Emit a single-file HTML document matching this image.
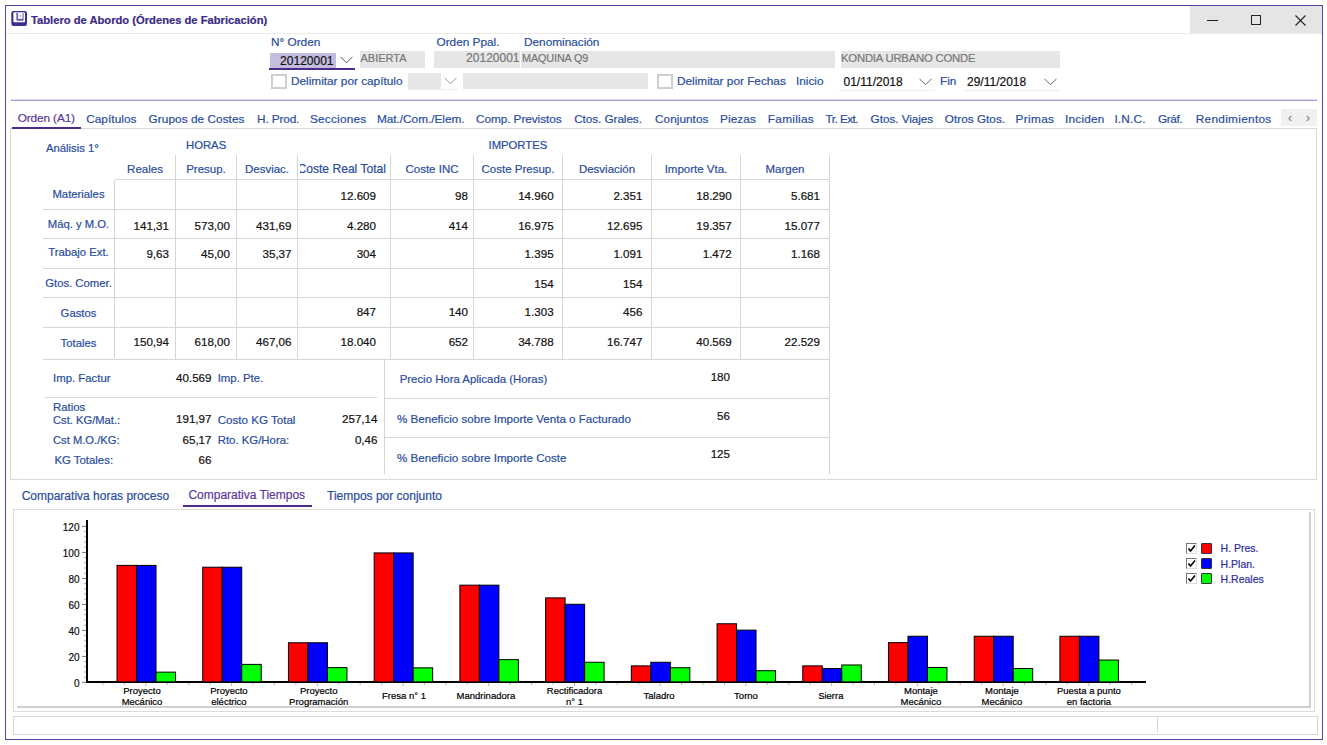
<!DOCTYPE html>
<html><head><meta charset="utf-8"><style>
html,body{margin:0;padding:0;background:#fff;}
body{width:1327px;height:745px;position:relative;overflow:hidden;font-family:"Liberation Sans",sans-serif;}
.t{position:absolute;white-space:nowrap;line-height:1;-webkit-text-stroke:0.2px currentColor;}
.r{position:absolute;}
</style></head><body>
<div class="r" style="left:5px;top:5px;width:1318px;height:735px;border:1px solid #5f3f9f;box-sizing:border-box;background:#fff;"></div>
<div class="r" style="left:1190px;top:6px;width:132px;height:27px;background:#e5e5e5;"></div>
<div class="r" style="left:6px;top:33px;width:1316px;height:1px;background:#ececec;"></div>
<svg class="r" style="left:11px;top:11px" width="17" height="16" viewBox="0 0 17 16">
<rect x="0.3" y="0" width="15.7" height="15" rx="2.2" fill="#3f2d8f"/>
<rect x="2.4" y="1.3" width="11.6" height="10" rx="1" fill="#fff"/>
<rect x="5.4" y="1.8" width="7.2" height="8" rx="0.8" fill="#6656ad"/>
<rect x="7" y="1.8" width="4.6" height="6" fill="#fff"/>
<rect x="8.6" y="4" width="1.8" height="1.8" fill="#b3a9d9"/>
</svg>
<div class="t" style="top:14.52px;font-size:11.2px;color:#3a2a86;font-weight:700;left:31px;">Tablero de Abordo (Órdenes de Fabricación)</div>
<div class="r" style="left:1207px;top:20px;width:11px;height:1px;background:#222;"></div>
<div class="r" style="left:1251px;top:15px;width:10px;height:10px;border:1px solid #222;box-sizing:border-box;"></div>
<svg class="r" style="left:1295px;top:15px" width="11" height="11" viewBox="0 0 11 11"><path d="M0.5 0.5L10.5 10.5M10.5 0.5L0.5 10.5" stroke="#222" stroke-width="1.1"/></svg>
<div class="t" style="top:36.51px;font-size:11.8px;color:#2a4d9d;left:271px;">N° Orden</div>
<div class="t" style="top:36.51px;font-size:11.8px;color:#2a4d9d;left:436.5px;">Orden Ppal.</div>
<div class="t" style="top:36.51px;font-size:11.8px;color:#2a4d9d;left:524px;">Denominación</div>
<div class="r" style="left:270px;top:52px;width:85px;height:17px;background:#fff;"></div>
<div class="r" style="left:270px;top:53px;width:66px;height:15px;background:#c5bde0;"></div>
<div class="r" style="left:269px;top:68px;width:86px;height:2px;background:#4b2a8a;"></div>
<div class="t" style="top:55.34px;font-size:12px;color:#111;right:993.5px;">20120001</div>
<svg class="r" style="left:340px;top:56px" width="13" height="8" viewBox="0 0 13 8"><path d="M0.5 0.8L6.5 6.8L12.5 0.8" fill="none" stroke="#555" stroke-width="1"/></svg>
<div class="r" style="left:360px;top:51px;width:65px;height:17px;background:#e6e6e6;"></div>
<div class="t" style="top:52.99px;font-size:11px;color:#777;left:360.5px;">ABIERTA</div>
<div class="r" style="left:434px;top:51px;width:86px;height:17px;background:#e6e6e6;"></div>
<div class="t" style="top:52.14px;font-size:12px;color:#777;right:807.5px;">20120001</div>
<div class="r" style="left:521px;top:51px;width:314px;height:17px;background:#e6e6e6;"></div>
<div class="t" style="top:53.16px;font-size:10.8px;color:#777;left:522px;letter-spacing:-0.1px;">MAQUINA Q9</div>
<div class="r" style="left:841px;top:51px;width:219px;height:17px;background:#e6e6e6;"></div>
<div class="t" style="top:52.73px;font-size:11.3px;color:#777;left:841px;letter-spacing:-0.2px;">KONDIA URBANO CONDE</div>
<div class="r" style="left:271px;top:74px;width:16px;height:15px;border:2px solid #cfcfcf;box-sizing:border-box;background:#fff;"></div>
<div class="t" style="top:76.01px;font-size:11.8px;color:#2a4d9d;left:291px;">Delimitar por capítulo</div>
<div class="r" style="left:408px;top:73px;width:33px;height:16px;background:#e6e6e6;"></div>
<div class="r" style="left:408px;top:89px;width:50px;height:1px;background:#eeeeee;"></div>
<svg class="r" style="left:444px;top:77px" width="13" height="8" viewBox="0 0 13 8"><path d="M0.5 0.8L6.5 6.8L12.5 0.8" fill="none" stroke="#999" stroke-width="1"/></svg>
<div class="r" style="left:463px;top:73px;width:185px;height:16px;background:#e6e6e6;"></div>
<div class="r" style="left:657px;top:74px;width:16px;height:15px;border:2px solid #cfcfcf;box-sizing:border-box;background:#fff;"></div>
<div class="t" style="top:76.01px;font-size:11.8px;color:#2a4d9d;left:677px;">Delimitar por Fechas</div>
<div class="t" style="top:75.51px;font-size:11.8px;color:#2a4d9d;left:796px;">Inicio</div>
<div class="t" style="top:75.84px;font-size:12px;color:#111;left:843.5px;">01/11/2018</div>
<div class="r" style="left:839px;top:90px;width:95px;height:1px;background:#eeeeee;"></div>
<svg class="r" style="left:919px;top:78px" width="13" height="8" viewBox="0 0 13 8"><path d="M0.5 0.8L6.5 6.8L12.5 0.8" fill="none" stroke="#666" stroke-width="1"/></svg>
<div class="t" style="top:75.51px;font-size:11.8px;color:#2a4d9d;left:940px;">Fin</div>
<div class="t" style="top:75.84px;font-size:12px;color:#111;left:967px;">29/11/2018</div>
<div class="r" style="left:964px;top:90px;width:96px;height:1px;background:#eeeeee;"></div>
<svg class="r" style="left:1044px;top:78px" width="13" height="8" viewBox="0 0 13 8"><path d="M0.5 0.8L6.5 6.8L12.5 0.8" fill="none" stroke="#666" stroke-width="1"/></svg>
<div class="r" style="left:11px;top:100px;width:1306px;height:1px;background:#a896d2;"></div>
<div class="r" style="left:11px;top:99px;width:1306px;height:1px;background:#e2dbef;"></div>
<div class="t" style="top:112.81px;font-size:11.8px;color:#5a3a98;left:17.7px;letter-spacing:-0.11px;">Orden (A1)</div>
<div class="t" style="top:113.81px;font-size:11.8px;color:#2a4d9d;left:86.2px;letter-spacing:0.05px;">Capítulos</div>
<div class="t" style="top:113.81px;font-size:11.8px;color:#2a4d9d;left:148.6px;letter-spacing:0.05px;">Grupos de Costes</div>
<div class="t" style="top:113.81px;font-size:11.8px;color:#2a4d9d;left:257.0px;letter-spacing:-0.13px;">H. Prod.</div>
<div class="t" style="top:113.81px;font-size:11.8px;color:#2a4d9d;left:310.0px;letter-spacing:0.21px;">Secciones</div>
<div class="t" style="top:113.81px;font-size:11.8px;color:#2a4d9d;left:377.0px;letter-spacing:-0.02px;">Mat./Com./Elem.</div>
<div class="t" style="top:113.81px;font-size:11.8px;color:#2a4d9d;left:476px;letter-spacing:-0.07px;">Comp. Previstos</div>
<div class="t" style="top:113.81px;font-size:11.8px;color:#2a4d9d;left:574.2px;letter-spacing:-0.09px;">Ctos. Grales.</div>
<div class="t" style="top:113.81px;font-size:11.8px;color:#2a4d9d;left:655.0px;letter-spacing:0.04px;">Conjuntos</div>
<div class="t" style="top:113.81px;font-size:11.8px;color:#2a4d9d;left:720.0px;letter-spacing:0.08px;">Piezas</div>
<div class="t" style="top:113.81px;font-size:11.8px;color:#2a4d9d;left:767.8px;letter-spacing:0.29px;">Familias</div>
<div class="t" style="top:113.81px;font-size:11.8px;color:#2a4d9d;left:825.6px;letter-spacing:-0.56px;">Tr. Ext.</div>
<div class="t" style="top:113.81px;font-size:11.8px;color:#2a4d9d;left:870.6px;letter-spacing:-0.07px;">Gtos. Viajes</div>
<div class="t" style="top:113.81px;font-size:11.8px;color:#2a4d9d;left:944.8px;letter-spacing:0px;">Otros Gtos.</div>
<div class="t" style="top:113.81px;font-size:11.8px;color:#2a4d9d;left:1015.6px;letter-spacing:0.34px;">Primas</div>
<div class="t" style="top:113.81px;font-size:11.8px;color:#2a4d9d;left:1065.0px;letter-spacing:0.22px;">Inciden</div>
<div class="t" style="top:113.81px;font-size:11.8px;color:#2a4d9d;left:1114.4px;letter-spacing:0.2px;">I.N.C.</div>
<div class="t" style="top:113.81px;font-size:11.8px;color:#2a4d9d;left:1158px;letter-spacing:-0.4px;">Gráf.</div>
<div class="t" style="top:113.81px;font-size:11.8px;color:#2a4d9d;left:1195.8px;letter-spacing:0.3px;">Rendimientos</div>
<div class="r" style="left:1281px;top:109px;width:36px;height:17px;background:#f0f0f0;"></div>
<div class="t" style="top:111.84px;font-size:12px;color:#888;left:1140px;width:300px;text-align:center;width:20px;left:1280px;">&lsaquo;</div>
<div class="t" style="top:111.84px;font-size:12px;color:#888;left:1158px;width:300px;text-align:center;width:20px;left:1298px;">&rsaquo;</div>
<div class="r" style="left:10px;top:128px;width:1307px;height:352px;border:1px solid #d9d9d9;box-sizing:border-box;"></div>
<div class="r" style="left:12px;top:127px;width:69px;height:2px;background:#4b2a8a;"></div>
<div class="t" style="top:143.43px;font-size:11.3px;color:#2a4d9d;left:46px;">Análisis 1°</div>
<div class="t" style="top:140.13px;font-size:11.3px;color:#2a4d9d;left:186px;">HORAS</div>
<div class="t" style="top:140.13px;font-size:11.3px;color:#2a4d9d;left:488.5px;">IMPORTES</div>
<div class="t" style="top:163.77px;font-size:11.5px;color:#2a4d9d;left:-5.0px;width:300px;text-align:center;">Reales</div>
<div class="t" style="top:163.77px;font-size:11.5px;color:#2a4d9d;left:56.0px;width:300px;text-align:center;">Presup.</div>
<div class="t" style="top:163.77px;font-size:11.5px;color:#2a4d9d;left:117.0px;width:300px;text-align:center;">Desviac.</div>
<div class="r" style="left:300px;top:160px;width:87px;height:18px;overflow:hidden;"><div class="t" style="right:1px;top:3.26px;font-size:12.1px;color:#2a4d9d;">Coste Real Total</div></div>
<div class="t" style="top:163.77px;font-size:11.5px;color:#2a4d9d;left:282.0px;width:300px;text-align:center;">Coste INC</div>
<div class="t" style="top:163.77px;font-size:11.5px;color:#2a4d9d;left:368.0px;width:300px;text-align:center;">Coste Presup.</div>
<div class="t" style="top:163.77px;font-size:11.5px;color:#2a4d9d;left:457.0px;width:300px;text-align:center;">Desviación</div>
<div class="t" style="top:163.77px;font-size:11.5px;color:#2a4d9d;left:546.0px;width:300px;text-align:center;">Importe Vta.</div>
<div class="t" style="top:163.77px;font-size:11.5px;color:#2a4d9d;left:635.0px;width:300px;text-align:center;">Margen</div>
<div class="r" style="left:175px;top:155px;width:1px;height:204px;background:#d6d6d6;"></div>
<div class="r" style="left:236px;top:155px;width:1px;height:204px;background:#d6d6d6;"></div>
<div class="r" style="left:297px;top:155px;width:1px;height:204px;background:#d6d6d6;"></div>
<div class="r" style="left:390px;top:155px;width:1px;height:204px;background:#d6d6d6;"></div>
<div class="r" style="left:473px;top:155px;width:1px;height:204px;background:#d6d6d6;"></div>
<div class="r" style="left:562px;top:155px;width:1px;height:204px;background:#d6d6d6;"></div>
<div class="r" style="left:651px;top:155px;width:1px;height:204px;background:#d6d6d6;"></div>
<div class="r" style="left:740px;top:155px;width:1px;height:204px;background:#d6d6d6;"></div>
<div class="r" style="left:829px;top:155px;width:1px;height:204px;background:#d6d6d6;"></div>
<div class="r" style="left:114px;top:180px;width:1px;height:178px;background:#d6d6d6;"></div>
<div class="r" style="left:115px;top:179px;width:715px;height:1px;background:#d6d6d6;"></div>
<div class="r" style="left:43px;top:209px;width:787px;height:1px;background:#d6d6d6;"></div>
<div class="r" style="left:43px;top:238px;width:787px;height:1px;background:#d6d6d6;"></div>
<div class="r" style="left:43px;top:268px;width:787px;height:1px;background:#d6d6d6;"></div>
<div class="r" style="left:43px;top:297px;width:787px;height:1px;background:#d6d6d6;"></div>
<div class="r" style="left:43px;top:327px;width:787px;height:1px;background:#d6d6d6;"></div>
<div class="r" style="left:43px;top:359px;width:787px;height:1px;background:#d6d6d6;"></div>
<div class="t" style="top:188.83px;font-size:11.3px;color:#2a4d9d;left:-71.5px;width:300px;text-align:center;">Materiales</div>
<div class="t" style="top:189.98px;font-size:11.6px;color:#111;right:951px;">12.609</div>
<div class="t" style="top:189.98px;font-size:11.6px;color:#111;right:859px;">98</div>
<div class="t" style="top:189.98px;font-size:11.6px;color:#111;right:773.4px;">14.960</div>
<div class="t" style="top:189.98px;font-size:11.6px;color:#111;right:684.6px;">2.351</div>
<div class="t" style="top:189.98px;font-size:11.6px;color:#111;right:595.3px;">18.290</div>
<div class="t" style="top:189.98px;font-size:11.6px;color:#111;right:507px;">5.681</div>
<div class="t" style="top:219.03px;font-size:11.3px;color:#2a4d9d;left:-71.5px;width:300px;text-align:center;">Máq. y M.O.</div>
<div class="t" style="top:219.58px;font-size:11.6px;color:#111;right:1158px;">141,31</div>
<div class="t" style="top:219.58px;font-size:11.6px;color:#111;right:1097px;">573,00</div>
<div class="t" style="top:219.58px;font-size:11.6px;color:#111;right:1035.5px;">431,69</div>
<div class="t" style="top:219.58px;font-size:11.6px;color:#111;right:951px;">4.280</div>
<div class="t" style="top:219.58px;font-size:11.6px;color:#111;right:859px;">414</div>
<div class="t" style="top:219.58px;font-size:11.6px;color:#111;right:773.4px;">16.975</div>
<div class="t" style="top:219.58px;font-size:11.6px;color:#111;right:684.6px;">12.695</div>
<div class="t" style="top:219.58px;font-size:11.6px;color:#111;right:595.3px;">19.357</div>
<div class="t" style="top:219.58px;font-size:11.6px;color:#111;right:507px;">15.077</div>
<div class="t" style="top:247.23px;font-size:11.3px;color:#2a4d9d;left:-71.5px;width:300px;text-align:center;">Trabajo Ext.</div>
<div class="t" style="top:248.38px;font-size:11.6px;color:#111;right:1158px;">9,63</div>
<div class="t" style="top:248.38px;font-size:11.6px;color:#111;right:1097px;">45,00</div>
<div class="t" style="top:248.38px;font-size:11.6px;color:#111;right:1035.5px;">35,37</div>
<div class="t" style="top:248.38px;font-size:11.6px;color:#111;right:951px;">304</div>
<div class="t" style="top:248.38px;font-size:11.6px;color:#111;right:773.4px;">1.395</div>
<div class="t" style="top:248.38px;font-size:11.6px;color:#111;right:684.6px;">1.091</div>
<div class="t" style="top:248.38px;font-size:11.6px;color:#111;right:595.3px;">1.472</div>
<div class="t" style="top:248.38px;font-size:11.6px;color:#111;right:507px;">1.168</div>
<div class="t" style="top:278.23px;font-size:11.3px;color:#2a4d9d;left:-71.5px;width:300px;text-align:center;">Gtos. Comer.</div>
<div class="t" style="top:277.68px;font-size:11.6px;color:#111;right:773.4px;">154</div>
<div class="t" style="top:277.68px;font-size:11.6px;color:#111;right:684.6px;">154</div>
<div class="t" style="top:307.63px;font-size:11.3px;color:#2a4d9d;left:-71.5px;width:300px;text-align:center;">Gastos</div>
<div class="t" style="top:306.48px;font-size:11.6px;color:#111;right:951px;">847</div>
<div class="t" style="top:306.48px;font-size:11.6px;color:#111;right:859px;">140</div>
<div class="t" style="top:306.48px;font-size:11.6px;color:#111;right:773.4px;">1.303</div>
<div class="t" style="top:306.48px;font-size:11.6px;color:#111;right:684.6px;">456</div>
<div class="t" style="top:337.83px;font-size:11.3px;color:#2a4d9d;left:-71.5px;width:300px;text-align:center;">Totales</div>
<div class="t" style="top:335.98px;font-size:11.6px;color:#111;right:1158px;">150,94</div>
<div class="t" style="top:335.98px;font-size:11.6px;color:#111;right:1097px;">618,00</div>
<div class="t" style="top:335.98px;font-size:11.6px;color:#111;right:1035.5px;">467,06</div>
<div class="t" style="top:335.98px;font-size:11.6px;color:#111;right:951px;">18.040</div>
<div class="t" style="top:335.98px;font-size:11.6px;color:#111;right:859px;">652</div>
<div class="t" style="top:335.98px;font-size:11.6px;color:#111;right:773.4px;">34.788</div>
<div class="t" style="top:335.98px;font-size:11.6px;color:#111;right:684.6px;">16.747</div>
<div class="t" style="top:335.98px;font-size:11.6px;color:#111;right:595.3px;">40.569</div>
<div class="t" style="top:335.98px;font-size:11.6px;color:#111;right:507px;">22.529</div>
<div class="r" style="left:45px;top:397px;width:332px;height:1px;background:#d6d6d6;"></div>
<div class="r" style="left:384px;top:359px;width:1px;height:115px;background:#d6d6d6;"></div>
<div class="r" style="left:829px;top:359px;width:1px;height:115px;background:#d6d6d6;"></div>
<div class="r" style="left:385px;top:397.5px;width:445px;height:1px;background:#d6d6d6;"></div>
<div class="r" style="left:385px;top:437px;width:445px;height:1px;background:#d6d6d6;"></div>
<div class="t" style="top:373.35px;font-size:11.4px;color:#2a4d9d;left:53px;">Imp. Factur</div>
<div class="t" style="top:372.18px;font-size:11.6px;color:#111;right:1115.5px;">40.569</div>
<div class="t" style="top:373.35px;font-size:11.4px;color:#2a4d9d;left:217.7px;">Imp. Pte.</div>
<div class="t" style="top:402.35px;font-size:11.4px;color:#2a4d9d;left:53px;">Ratios</div>
<div class="t" style="top:414.52px;font-size:11.2px;color:#2a4d9d;left:53px;">Cst. KG/Mat.:</div>
<div class="t" style="top:413.18px;font-size:11.6px;color:#111;right:1115.5px;">191,97</div>
<div class="t" style="top:414.18px;font-size:11.6px;color:#2a4d9d;left:217.7px;">Costo KG Total</div>
<div class="t" style="top:413.18px;font-size:11.6px;color:#111;right:949.5px;">257,14</div>
<div class="t" style="top:435.02px;font-size:11.2px;color:#2a4d9d;left:53px;">Cst M.O./KG:</div>
<div class="t" style="top:434.18px;font-size:11.6px;color:#111;right:1115.5px;">65,17</div>
<div class="t" style="top:434.85px;font-size:11.4px;color:#2a4d9d;left:217.7px;">Rto. KG/Hora:</div>
<div class="t" style="top:434.18px;font-size:11.6px;color:#111;right:949.5px;">0,46</div>
<div class="t" style="top:455.35px;font-size:11.4px;color:#2a4d9d;left:54.4px;">KG Totales:</div>
<div class="t" style="top:454.18px;font-size:11.6px;color:#111;right:1115.5px;">66</div>
<div class="t" style="top:373.55px;font-size:11.4px;color:#2a4d9d;left:399.7px;">Precio Hora Aplicada (Horas)</div>
<div class="t" style="top:371.48px;font-size:11.6px;color:#111;right:597px;">180</div>
<div class="t" style="top:413.18px;font-size:11.6px;color:#2a4d9d;left:397px;">% Beneficio sobre Importe Venta o Facturado</div>
<div class="t" style="top:410.18px;font-size:11.6px;color:#111;right:597px;">56</div>
<div class="t" style="top:452.48px;font-size:11.6px;color:#2a4d9d;left:397px;">% Beneficio sobre Importe Coste</div>
<div class="t" style="top:447.68px;font-size:11.6px;color:#111;right:597px;">125</div>
<div class="t" style="top:490.34px;font-size:12px;color:#2a4d9d;left:21.7px;">Comparativa horas proceso</div>
<div class="t" style="top:488.84px;font-size:12px;color:#5a3a98;left:188.4px;">Comparativa Tiempos</div>
<div class="r" style="left:183px;top:505px;width:129px;height:2px;background:#4b2a8a;"></div>
<div class="t" style="top:490.34px;font-size:12px;color:#2a4d9d;left:327px;">Tiempos por conjunto</div>
<div class="r" style="left:13px;top:509px;width:1302px;height:203px;border:1px solid #dcdcdc;box-sizing:border-box;"></div>
<div class="r" style="left:1309px;top:512px;width:2px;height:196px;background:#cfcfcf;"></div>
<div class="r" style="left:17px;top:706px;width:1294px;height:2px;background:#cfcfcf;"></div>
<div class="r" style="left:13px;top:716px;width:1305px;height:19px;border:1px solid #d6d6d6;box-sizing:border-box;"></div>
<div class="r" style="left:1157px;top:717px;width:1px;height:15px;background:#d6d6d6;"></div>
<svg class="r" style="left:0;top:0" width="1327" height="745" viewBox="0 0 1327 745">
<rect x="86" y="520" width="2" height="163" fill="#000"/>
<rect x="86" y="681" width="1060" height="2" fill="#000"/>
<rect x="82" y="681.9" width="4" height="1" fill="#777"/>
<rect x="84" y="676.7" width="2" height="1" fill="#aaa"/>
<rect x="84" y="671.5" width="2" height="1" fill="#aaa"/>
<rect x="84" y="666.3" width="2" height="1" fill="#aaa"/>
<rect x="84" y="661.1" width="2" height="1" fill="#aaa"/>
<rect x="82" y="655.9" width="4" height="1" fill="#777"/>
<rect x="84" y="650.7" width="2" height="1" fill="#aaa"/>
<rect x="84" y="645.5" width="2" height="1" fill="#aaa"/>
<rect x="84" y="640.3" width="2" height="1" fill="#aaa"/>
<rect x="84" y="635.1" width="2" height="1" fill="#aaa"/>
<rect x="82" y="629.9" width="4" height="1" fill="#777"/>
<rect x="84" y="624.7" width="2" height="1" fill="#aaa"/>
<rect x="84" y="619.5" width="2" height="1" fill="#aaa"/>
<rect x="84" y="614.3" width="2" height="1" fill="#aaa"/>
<rect x="84" y="609.1" width="2" height="1" fill="#aaa"/>
<rect x="82" y="603.9" width="4" height="1" fill="#777"/>
<rect x="84" y="598.7" width="2" height="1" fill="#aaa"/>
<rect x="84" y="593.5" width="2" height="1" fill="#aaa"/>
<rect x="84" y="588.3" width="2" height="1" fill="#aaa"/>
<rect x="84" y="583.1" width="2" height="1" fill="#aaa"/>
<rect x="82" y="577.9" width="4" height="1" fill="#777"/>
<rect x="84" y="572.7" width="2" height="1" fill="#aaa"/>
<rect x="84" y="567.5" width="2" height="1" fill="#aaa"/>
<rect x="84" y="562.3" width="2" height="1" fill="#aaa"/>
<rect x="84" y="557.1" width="2" height="1" fill="#aaa"/>
<rect x="82" y="551.9" width="4" height="1" fill="#777"/>
<rect x="84" y="546.7" width="2" height="1" fill="#aaa"/>
<rect x="84" y="541.5" width="2" height="1" fill="#aaa"/>
<rect x="84" y="536.3" width="2" height="1" fill="#aaa"/>
<rect x="84" y="531.1" width="2" height="1" fill="#aaa"/>
<rect x="82" y="525.9" width="4" height="1" fill="#777"/>
<rect x="117.00" y="565.40" width="19.5" height="116.50" fill="#ff0000" stroke="#000" stroke-width="1"/>
<rect x="136.50" y="565.40" width="19.5" height="116.50" fill="#0000ff" stroke="#000" stroke-width="1"/>
<rect x="156.00" y="672.13" width="19.5" height="9.77" fill="#00ff00" stroke="#000" stroke-width="1"/>
<rect x="202.72" y="567.22" width="19.5" height="114.68" fill="#ff0000" stroke="#000" stroke-width="1"/>
<rect x="222.22" y="567.22" width="19.5" height="114.68" fill="#0000ff" stroke="#000" stroke-width="1"/>
<rect x="241.72" y="664.39" width="19.5" height="17.50" fill="#00ff00" stroke="#000" stroke-width="1"/>
<rect x="288.44" y="642.75" width="19.5" height="39.15" fill="#ff0000" stroke="#000" stroke-width="1"/>
<rect x="307.94" y="642.75" width="19.5" height="39.15" fill="#0000ff" stroke="#000" stroke-width="1"/>
<rect x="327.44" y="667.58" width="19.5" height="14.32" fill="#00ff00" stroke="#000" stroke-width="1"/>
<rect x="374.16" y="552.92" width="19.5" height="128.98" fill="#ff0000" stroke="#000" stroke-width="1"/>
<rect x="393.66" y="552.92" width="19.5" height="128.98" fill="#0000ff" stroke="#000" stroke-width="1"/>
<rect x="413.16" y="667.84" width="19.5" height="14.06" fill="#00ff00" stroke="#000" stroke-width="1"/>
<rect x="459.88" y="585.16" width="19.5" height="96.74" fill="#ff0000" stroke="#000" stroke-width="1"/>
<rect x="479.38" y="585.16" width="19.5" height="96.74" fill="#0000ff" stroke="#000" stroke-width="1"/>
<rect x="498.88" y="659.65" width="19.5" height="22.25" fill="#00ff00" stroke="#000" stroke-width="1"/>
<rect x="545.60" y="597.90" width="19.5" height="84.00" fill="#ff0000" stroke="#000" stroke-width="1"/>
<rect x="565.10" y="604.27" width="19.5" height="77.63" fill="#0000ff" stroke="#000" stroke-width="1"/>
<rect x="584.60" y="662.25" width="19.5" height="19.65" fill="#00ff00" stroke="#000" stroke-width="1"/>
<rect x="631.32" y="665.89" width="19.5" height="16.01" fill="#ff0000" stroke="#000" stroke-width="1"/>
<rect x="650.82" y="662.25" width="19.5" height="19.65" fill="#0000ff" stroke="#000" stroke-width="1"/>
<rect x="670.32" y="667.71" width="19.5" height="14.19" fill="#00ff00" stroke="#000" stroke-width="1"/>
<rect x="717.04" y="623.77" width="19.5" height="58.13" fill="#ff0000" stroke="#000" stroke-width="1"/>
<rect x="736.54" y="630.14" width="19.5" height="51.76" fill="#0000ff" stroke="#000" stroke-width="1"/>
<rect x="756.04" y="670.70" width="19.5" height="11.20" fill="#00ff00" stroke="#000" stroke-width="1"/>
<rect x="802.76" y="665.89" width="19.5" height="16.01" fill="#ff0000" stroke="#000" stroke-width="1"/>
<rect x="822.26" y="668.49" width="19.5" height="13.41" fill="#0000ff" stroke="#000" stroke-width="1"/>
<rect x="841.76" y="664.98" width="19.5" height="16.92" fill="#00ff00" stroke="#000" stroke-width="1"/>
<rect x="888.48" y="642.62" width="19.5" height="39.28" fill="#ff0000" stroke="#000" stroke-width="1"/>
<rect x="907.98" y="636.25" width="19.5" height="45.65" fill="#0000ff" stroke="#000" stroke-width="1"/>
<rect x="927.48" y="667.45" width="19.5" height="14.45" fill="#00ff00" stroke="#000" stroke-width="1"/>
<rect x="974.20" y="636.25" width="19.5" height="45.65" fill="#ff0000" stroke="#000" stroke-width="1"/>
<rect x="993.70" y="636.25" width="19.5" height="45.65" fill="#0000ff" stroke="#000" stroke-width="1"/>
<rect x="1013.20" y="668.49" width="19.5" height="13.41" fill="#00ff00" stroke="#000" stroke-width="1"/>
<rect x="1059.92" y="636.25" width="19.5" height="45.65" fill="#ff0000" stroke="#000" stroke-width="1"/>
<rect x="1079.42" y="636.25" width="19.5" height="45.65" fill="#0000ff" stroke="#000" stroke-width="1"/>
<rect x="1098.92" y="660.04" width="19.5" height="21.86" fill="#00ff00" stroke="#000" stroke-width="1"/>
<rect x="102.5" y="683" width="1" height="2" fill="#b4b4b4"/>
<rect x="123.9" y="683" width="1" height="2" fill="#b4b4b4"/>
<rect x="145.4" y="683" width="1" height="3" fill="#b4b4b4"/>
<rect x="166.8" y="683" width="1" height="2" fill="#b4b4b4"/>
<rect x="188.2" y="683" width="1" height="2" fill="#b4b4b4"/>
<rect x="209.7" y="683" width="1" height="2" fill="#b4b4b4"/>
<rect x="231.1" y="683" width="1" height="3" fill="#b4b4b4"/>
<rect x="252.5" y="683" width="1" height="2" fill="#b4b4b4"/>
<rect x="273.9" y="683" width="1" height="2" fill="#b4b4b4"/>
<rect x="295.4" y="683" width="1" height="2" fill="#b4b4b4"/>
<rect x="316.8" y="683" width="1" height="3" fill="#b4b4b4"/>
<rect x="338.2" y="683" width="1" height="2" fill="#b4b4b4"/>
<rect x="359.7" y="683" width="1" height="2" fill="#b4b4b4"/>
<rect x="381.1" y="683" width="1" height="2" fill="#b4b4b4"/>
<rect x="402.5" y="683" width="1" height="3" fill="#b4b4b4"/>
<rect x="423.9" y="683" width="1" height="2" fill="#b4b4b4"/>
<rect x="445.4" y="683" width="1" height="2" fill="#b4b4b4"/>
<rect x="466.8" y="683" width="1" height="2" fill="#b4b4b4"/>
<rect x="488.2" y="683" width="1" height="3" fill="#b4b4b4"/>
<rect x="509.7" y="683" width="1" height="2" fill="#b4b4b4"/>
<rect x="531.1" y="683" width="1" height="2" fill="#b4b4b4"/>
<rect x="552.5" y="683" width="1" height="2" fill="#b4b4b4"/>
<rect x="574.0" y="683" width="1" height="3" fill="#b4b4b4"/>
<rect x="595.4" y="683" width="1" height="2" fill="#b4b4b4"/>
<rect x="616.8" y="683" width="1" height="2" fill="#b4b4b4"/>
<rect x="638.2" y="683" width="1" height="2" fill="#b4b4b4"/>
<rect x="659.7" y="683" width="1" height="3" fill="#b4b4b4"/>
<rect x="681.1" y="683" width="1" height="2" fill="#b4b4b4"/>
<rect x="702.5" y="683" width="1" height="2" fill="#b4b4b4"/>
<rect x="724.0" y="683" width="1" height="2" fill="#b4b4b4"/>
<rect x="745.4" y="683" width="1" height="3" fill="#b4b4b4"/>
<rect x="766.8" y="683" width="1" height="2" fill="#b4b4b4"/>
<rect x="788.3" y="683" width="1" height="2" fill="#b4b4b4"/>
<rect x="809.7" y="683" width="1" height="2" fill="#b4b4b4"/>
<rect x="831.1" y="683" width="1" height="3" fill="#b4b4b4"/>
<rect x="852.5" y="683" width="1" height="2" fill="#b4b4b4"/>
<rect x="874.0" y="683" width="1" height="2" fill="#b4b4b4"/>
<rect x="895.4" y="683" width="1" height="2" fill="#b4b4b4"/>
<rect x="916.8" y="683" width="1" height="3" fill="#b4b4b4"/>
<rect x="938.3" y="683" width="1" height="2" fill="#b4b4b4"/>
<rect x="959.7" y="683" width="1" height="2" fill="#b4b4b4"/>
<rect x="981.1" y="683" width="1" height="2" fill="#b4b4b4"/>
<rect x="1002.6" y="683" width="1" height="3" fill="#b4b4b4"/>
<rect x="1024.0" y="683" width="1" height="2" fill="#b4b4b4"/>
<rect x="1045.4" y="683" width="1" height="2" fill="#b4b4b4"/>
<rect x="1066.8" y="683" width="1" height="2" fill="#b4b4b4"/>
<rect x="1088.3" y="683" width="1" height="3" fill="#b4b4b4"/>
<rect x="1109.7" y="683" width="1" height="2" fill="#b4b4b4"/>
<rect x="1131.1" y="683" width="1" height="2" fill="#b4b4b4"/>
</svg>
<div class="t" style="top:679.43px;font-size:10px;color:#111;right:1247.5px;">0</div>
<div class="t" style="top:653.43px;font-size:10px;color:#111;right:1247.5px;">20</div>
<div class="t" style="top:627.43px;font-size:10px;color:#111;right:1247.5px;">40</div>
<div class="t" style="top:601.43px;font-size:10px;color:#111;right:1247.5px;">60</div>
<div class="t" style="top:575.43px;font-size:10px;color:#111;right:1247.5px;">80</div>
<div class="t" style="top:549.43px;font-size:10px;color:#111;right:1247.5px;">100</div>
<div class="t" style="top:523.43px;font-size:10px;color:#111;right:1247.5px;">120</div>
<div class="t" style="top:685.96px;font-size:9.5px;color:#000;left:-8px;width:300px;text-align:center;">Proyecto</div>
<div class="t" style="top:696.56px;font-size:9.5px;color:#000;left:-8px;width:300px;text-align:center;">Mecánico</div>
<div class="t" style="top:685.96px;font-size:9.5px;color:#000;left:78.9px;width:300px;text-align:center;">Proyecto</div>
<div class="t" style="top:696.56px;font-size:9.5px;color:#000;left:78.9px;width:300px;text-align:center;">eléctrico</div>
<div class="t" style="top:685.96px;font-size:9.5px;color:#000;left:168.7px;width:300px;text-align:center;">Proyecto</div>
<div class="t" style="top:696.56px;font-size:9.5px;color:#000;left:168.7px;width:300px;text-align:center;">Programación</div>
<div class="t" style="top:690.96px;font-size:9.5px;color:#000;left:254px;width:300px;text-align:center;">Fresa n° 1</div>
<div class="t" style="top:690.96px;font-size:9.5px;color:#000;left:335.9px;width:300px;text-align:center;">Mandrinadora</div>
<div class="t" style="top:685.96px;font-size:9.5px;color:#000;left:424.6px;width:300px;text-align:center;">Rectificadora</div>
<div class="t" style="top:696.56px;font-size:9.5px;color:#000;left:424.6px;width:300px;text-align:center;">n° 1</div>
<div class="t" style="top:690.96px;font-size:9.5px;color:#000;left:509.1px;width:300px;text-align:center;">Taladro</div>
<div class="t" style="top:690.96px;font-size:9.5px;color:#000;left:596px;width:300px;text-align:center;">Torno</div>
<div class="t" style="top:690.96px;font-size:9.5px;color:#000;left:680.8px;width:300px;text-align:center;">Sierra</div>
<div class="t" style="top:685.96px;font-size:9.5px;color:#000;left:770.9px;width:300px;text-align:center;">Montaje</div>
<div class="t" style="top:696.56px;font-size:9.5px;color:#000;left:770.9px;width:300px;text-align:center;">Mecánico</div>
<div class="t" style="top:685.96px;font-size:9.5px;color:#000;left:851.9px;width:300px;text-align:center;">Montaje</div>
<div class="t" style="top:696.56px;font-size:9.5px;color:#000;left:851.9px;width:300px;text-align:center;">Mecánico</div>
<div class="t" style="top:685.96px;font-size:9.5px;color:#000;left:938.9000000000001px;width:300px;text-align:center;">Puesta a punto</div>
<div class="t" style="top:696.56px;font-size:9.5px;color:#000;left:938.9000000000001px;width:300px;text-align:center;">en factoria</div>
<div class="r" style="left:1186px;top:542.5px;width:11px;height:11px;border:1px solid #777;border-right-color:#ddd;border-bottom-color:#ddd;box-sizing:border-box;background:#fff;"></div>
<svg class="r" style="left:1187px;top:543.5px" width="9" height="9" viewBox="0 0 9 9"><path d="M1.5 4.5L3.5 7L8 1.5" fill="none" stroke="#000" stroke-width="1.6"/></svg>
<div class="r" style="left:1201px;top:542.5px;width:11px;height:11px;background:#ff0000;border:1px solid #333;border-radius:1px;box-sizing:border-box;"></div>
<div class="t" style="top:543.11px;font-size:10.5px;color:#2e2e9e;left:1220.6px;">H. Pres.</div>
<div class="r" style="left:1186px;top:557.9px;width:11px;height:11px;border:1px solid #777;border-right-color:#ddd;border-bottom-color:#ddd;box-sizing:border-box;background:#fff;"></div>
<svg class="r" style="left:1187px;top:558.9px" width="9" height="9" viewBox="0 0 9 9"><path d="M1.5 4.5L3.5 7L8 1.5" fill="none" stroke="#000" stroke-width="1.6"/></svg>
<div class="r" style="left:1201px;top:557.9px;width:11px;height:11px;background:#0000ff;border:1px solid #333;border-radius:1px;box-sizing:border-box;"></div>
<div class="t" style="top:558.51px;font-size:10.5px;color:#2e2e9e;left:1220.6px;">H.Plan.</div>
<div class="r" style="left:1186px;top:573.3px;width:11px;height:11px;border:1px solid #777;border-right-color:#ddd;border-bottom-color:#ddd;box-sizing:border-box;background:#fff;"></div>
<svg class="r" style="left:1187px;top:574.3px" width="9" height="9" viewBox="0 0 9 9"><path d="M1.5 4.5L3.5 7L8 1.5" fill="none" stroke="#000" stroke-width="1.6"/></svg>
<div class="r" style="left:1201px;top:573.3px;width:11px;height:11px;background:#00ff00;border:1px solid #333;border-radius:1px;box-sizing:border-box;"></div>
<div class="t" style="top:573.91px;font-size:10.5px;color:#2e2e9e;left:1220.6px;">H.Reales</div>
</body></html>
